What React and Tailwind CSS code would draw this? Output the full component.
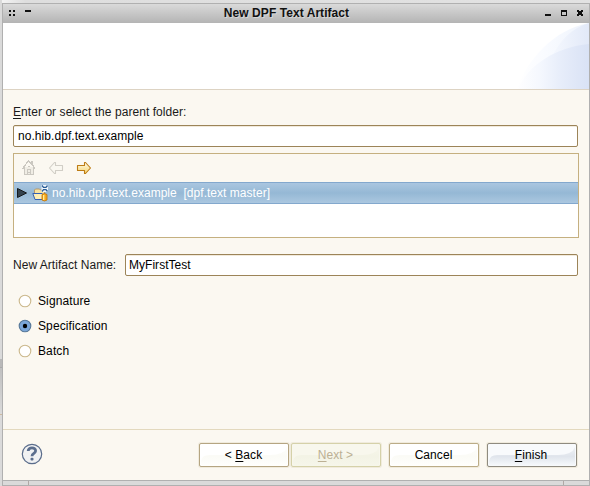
import React from 'react';

function Field({ children, className = '' }) {
  return (
    <div className={`flex h-[22px] items-center rounded-[2px] border border-[#9c8458] bg-white text-black shadow-[inset_0_1px_0_#f1eadc] ${className}`}>
      {children}
    </div>
  );
}

function Radio({ label, checked }) {
  return (
    <div className="flex h-[25px] items-center tracking-[0.11px]">
      <svg width="14" height="14" viewBox="0 0 14 14" className="mr-[6px]">
        <circle cx="7" cy="7" r="5.8" fill={checked ? '#7ba6d8' : '#fff'} stroke={checked ? '#557798' : '#cbb88c'} strokeWidth="1.1" />
        {checked && <circle cx="7" cy="7" r="2.2" fill="#000" />}
      </svg>
      <span>{label}</span>
    </div>
  );
}

function Button({ children, className, shade = '#fbfbf6', end = '#fffffd' }) {
  return (
    <div className={`relative flex h-6 w-[90px] items-center justify-center rounded-[2px] border shadow-[0_0_0_1px_#f0ebdd] ${className}`}>
      <svg className="absolute inset-0" width="88" height="22" viewBox="0 0 88 22">
        <defs>
          <linearGradient id={`g${shade.slice(1)}`} x1="0" y1="0" x2="0" y2="1">
            <stop offset="0" stopColor={shade} stopOpacity=".4" />
            <stop offset=".5" stopColor={shade} />
            <stop offset="1" stopColor={end} />
          </linearGradient>
        </defs>
        <path d="M1 17Q2 11 9 11H70Q84 11 87 3V22H1Z" fill={`url(#g${shade.slice(1)})`} />
      </svg>
      <span className="relative whitespace-pre">{children}</span>
    </div>
  );
}

function U({ children }) {
  return <span className="underline decoration-1 underline-offset-[2px]">{children}</span>;
}

function Banner() {
  return (
    <div className="flex h-[67px] justify-end border-b border-[#ddd3c3] bg-white">
      <svg width="73" height="66" viewBox="0 0 73 66">
        <defs>
          <linearGradient id="outer">
            <stop offset="0" stopColor="#fff" />
            <stop offset=".4" stopColor="#f9fbff" />
            <stop offset="1" stopColor="#eef3fc" />
          </linearGradient>
          <linearGradient id="upper">
            <stop offset="0" stopColor="#f5f8fe" />
            <stop offset="1" stopColor="#e2e9f8" />
          </linearGradient>
          <linearGradient id="lower">
            <stop offset="0" stopColor="#fefeff" />
            <stop offset=".3" stopColor="#f5f8fe" />
            <stop offset=".6" stopColor="#e7edfa" />
            <stop offset="1" stopColor="#d9e2f5" />
          </linearGradient>
        </defs>
        <path d="M1 66C10 38 38 6 73 0V66Z" fill="url(#outer)" />
        <path d="M36 34C44 17 56 5 73 0V25Z" fill="url(#upper)" />
        <path d="M2 66C12 42 40 24 73 21V66Z" fill="url(#lower)" />
      </svg>
    </div>
  );
}

function HomeIcon() {
  return (
    <svg width="14" height="16" viewBox="0 0 14 16" fill="#cbc8c1" shapeRendering="crispEdges">
      <path d="M2 7H12V15H2Z" fill="#f0ede5" />
      <path d="M6 0h1v1h1v1h1V1h2v4h1v2h1v2h-1v6H2V9H0V8h1V6h1V5h1V4h1V2h1V1h1zM6 2v1H5v1H4v2H3v8h2V9h4v5h2V6h-1V5H9V4H8V3H7V2zM6 10v4h2v-4z" fillRule="evenodd" />
      <path d="M6 6h2v1H6zM6 12h2v1H6z" />
    </svg>
  );
}

function Arrow({ active }) {
  return (
    <svg width="16" height="14" viewBox="0 0 16 14" className={active ? '' : 'scale-x-[-1]'}>
      <defs>
        <linearGradient id="arrow" x1="0" y1="0" x2="0" y2="1">
          <stop offset="0" stopColor="#fffbea" />
          <stop offset="1" stopColor="#f5d36d" />
        </linearGradient>
      </defs>
      <path d="M1.5 4.5H8.5V1.5H9.5L14.5 7L9.5 12.5H8.5V9.5H1.5Z" fill={active ? 'url(#arrow)' : '#faf8f1'} stroke={active ? '#bd7c14' : '#d1cec6'} strokeWidth="1.1" strokeLinejoin="round" />
    </svg>
  );
}

function FolderIcon() {
  return (
    <svg width="17" height="17" viewBox="0 0 17 17">
      <path d="M2.5 13V5L3.5 4H7.5L8.5 5H12.5V13Z" fill="#f8e3a0" stroke="#b5976a" />
      <path d="M.8 8.5H10.5L13 14.5H3Z" fill="#ffefb4" />
      <path d="M10.5 8.5H.8L3 14.5H12" fill="none" stroke="#3560b4" />
      <path d="M9.5 0H16V7H9.5Z" fill="#f2f7fc" />
      <path d="M10 .5L11.5 2.3H14L15.5 .5M10 6.5L11.5 4.7H14L15.5 6.5" fill="none" stroke="#285b94" strokeWidth="1.3" />
      <path d="M10 9.5Q12.5 7.5 15 9.5V15Q12.5 17 10 15Z" fill="#f6a91b" stroke="#bd7009" strokeWidth=".8" />
      <path d="M11.7 10V15" stroke="#fff0a5" strokeWidth="1.3" />
    </svg>
  );
}

function TitleBar() {
  return (
    <div className="flex h-[19px] items-center bg-linear-to-b from-[#dadada] to-[#b4b4b4] text-[#111]">
      <svg width="60" height="19" shapeRendering="crispEdges" fill="#111">
        <path d="M6 6h2v2h-2zM10 6h2v2h-2zM6 10h2v2h-2zM10 10h2v2h-2zM22 6h6v2h-6z" />
      </svg>
      <div className="flex-1 pb-[2px] pr-[19px] text-center font-bold [text-shadow:1px_1px_0_#d8d8d8]">New DPF Text Artifact</div>
      <svg width="60" height="19" shapeRendering="crispEdges" fill="#111">
        <path d="M16 10h6v2h-6z" />
        <path fillRule="evenodd" d="M32 6h6v6h-6zM33 8v3h4v-3z" />
        <path d="M48 6h2v1h2v-1h2v2h-1v2h1v2h-2v-1h-2v1h-2v-2h1v-2h-1z" />
      </svg>
    </div>
  );
}

export default function App() {
  return (
    <div className="flex h-[486px] w-[590px] overflow-hidden bg-[#dddddd] font-['Liberation_Sans',Arial,sans-serif] text-[12px] leading-[14px] tracking-[0.06px] text-[#1a1a1a]">
      <div className="flex w-[2px] shrink-0 flex-col bg-[#dadada]">
        <div className="h-[359px]" />
        <div className="h-[8px] bg-[#b9b9b9]" />
        <div className="h-[47px] border-t border-[#aaa] bg-linear-to-b from-[#c0c0c0] to-[#dadada]" />
        <div className="h-px bg-[#cdb9a0]" />
      </div>
      <div className="flex min-w-0 flex-1 flex-col">
        <div className="h-[3px] shrink-0 bg-linear-to-r from-[#f3f3f3] via-[#dedede] via-[4%] to-[#e2e2e2]" />
        <div className="flex min-h-0 flex-1 flex-col border border-[#b0b0b0] bg-[#fbf8f1]">
          <TitleBar />
          <Banner />
          <div className="flex h-[339px] shrink-0 flex-col pl-[10px] pr-[10px] pt-[15px]">
            <div className="h-[20px]"><U>E</U>nter or select the parent folder:</div>
            <Field className="mr-[1px] pl-[4px]">no.hib.dpf.text.example</Field>
            <div className="mt-[6px] h-[85px] border border-[#c5b080] bg-white">
              <div className="flex h-[28px] items-center gap-[12px] bg-[#fbf8f1] pl-[8px]">
                <HomeIcon />
                <Arrow />
                <Arrow active />
              </div>
              <div className="flex h-[22px] items-center border-y border-[#83a8cd] bg-linear-to-b from-[#aac6e0] via-[#95b8d5] to-[#abc7e0] pl-[3px] text-white">
                <svg width="10" height="10" viewBox="0 0 10 10" className="mr-[5px]">
                  <path d="M.5.5V9.5L9.5 5Z" fill="#34434e" stroke="#15191d" />
                </svg>
                <FolderIcon />
                <span className="ml-[3px] whitespace-pre tracking-[0.03px]">no.hib.dpf.text.example  [dpf.text master]</span>
              </div>
            </div>
            <div className="mr-[1px] mt-[16px] flex items-center">
              <span className="w-[112px] whitespace-nowrap tracking-[0.03px]">New Artifact Name:</span>
              <Field className="flex-1 pl-[3px] tracking-[0.03px]">MyFirstTest</Field>
            </div>
            <div className="mt-[12px] pl-[5px] text-black">
              <Radio label="Signature" />
              <Radio label="Specification" checked />
              <Radio label="Batch" />
            </div>
          </div>
          <div className="flex h-[51px] shrink-0 items-center border-t border-[#e3d9be] pl-[18px] pr-[12px]">
            <svg width="22" height="22" viewBox="0 0 22 22" className="relative top-[-1px] mr-auto">
              <circle cx="11" cy="11" r="9.7" fill="#f0f1f2" stroke="#596c8b" strokeWidth="1.2" />
              <path d="M7.2 8C7.2 3.8 14.8 3.8 14.6 8C14.5 10.5 11 10.3 11 13.2" fill="none" stroke="#5b6e8d" strokeWidth="2.8" />
              <rect x="9.5" y="14.8" width="3" height="2.8" rx="1" fill="#5b6e8d" />
            </svg>
            <div className="flex text-black">
              <Button className="mr-[2px] border-[#b5a582] bg-white pr-[1px]">&lt; <U>B</U>ack</Button>
              <Button className="mr-[8px] border-[#d5d1a9] bg-[#f8f7ed] pr-[1px] text-[#bcb094]" shade="#f3f3e5" end="#f6f6ea"><U>N</U>ext &gt;</Button>
              <Button className="mr-[8px] border-[#bbac87] bg-white pr-[1px]">Cancel</Button>
              <Button className="border-[#8f8b80] bg-[#f8fafc] pr-[2px]" shade="#e0e5ec" end="#f7fafc"><U>F</U>inish</Button>
            </div>
          </div>
          <div className="flex h-[5px] shrink-0 border-t border-[#b0b0b0] bg-[#dadada]">
            <div className="w-[26px] border-r border-[#b0a8a5]" />
            <div className="flex-1" />
            <div className="w-[26px] border-l border-[#b0a8a5]" />
          </div>
        </div>
      </div>
    </div>
  );
}
